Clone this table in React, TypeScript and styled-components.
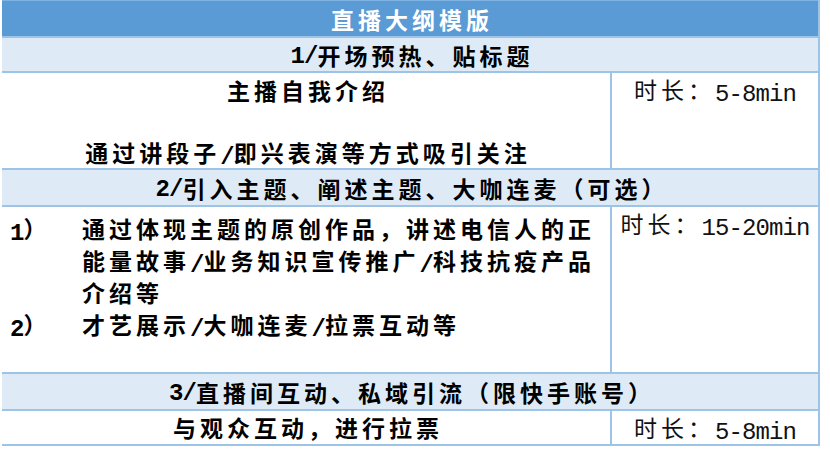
import React from "react";
import styled, { createGlobalStyle } from "styled-components";

const LINE = "#9dc3e6";

const Global = createGlobalStyle`
  html, body { margin: 0; padding: 0; background: #ffffff; }
  body { font-family: "Noto Sans CJK SC", sans-serif; }
`;

const Table = styled.div`
  width: 818px;
  box-sizing: border-box;
  margin-left: 2px;
  border-right: 2px solid ${LINE};
  display: flex;
  flex-direction: column;
  font-family: "Noto Sans CJK SC", "Noto Sans CJK JP", sans-serif;
  font-size: 23px;
  letter-spacing: 4px;
  color: #000;
`;

const TitleBar = styled.div`
  height: 38px;
  box-sizing: border-box;
  background: #5b9bd5;
  border-top: 1px solid #7eb2e2;
  border-bottom: 2px solid ${LINE};
  color: #ffffff;
  font-weight: 700;
  display: flex;
  align-items: center;
  justify-content: center;
  padding-left: 4px;
`;

const Band = styled.div<{ $h: number }>`
  height: ${(p) => p.$h}px;
  box-sizing: border-box;
  background: #deebf7;
  border-bottom: 2px solid ${LINE};
  font-weight: 700;
  display: flex;
  align-items: center;
  justify-content: center;
  padding-left: 4px;
`;

const Row = styled.div<{ $h: number }>`
  height: ${(p) => p.$h}px;
  box-sizing: border-box;
  border-bottom: 2px solid ${LINE};
  display: flex;
`;

const MainCell = styled.div<{ $pt: number; $lh: number; $center?: boolean }>`
  width: 610px;
  flex: none;
  box-sizing: border-box;
  border-right: 2px solid ${LINE};
  padding-top: ${(p) => p.$pt}px;
  padding-left: ${(p) => (p.$center ? 4 : 8)}px;
  line-height: ${(p) => p.$lh}px;
  font-weight: 700;
  text-align: ${(p) => (p.$center ? "center" : "left")};
`;

const TimeCell = styled.div<{ $pt: number; $lh: number }>`
  flex: 1;
  padding-top: ${(p) => p.$pt}px;
  line-height: ${(p) => p.$lh}px;
  text-align: center;
  font-weight: 400;
  color: #111;
`;

const TextLine = styled.div`
  min-height: 1lh;
`;

const List = styled.div`
  display: grid;
  grid-template-columns: 72px 1fr;
`;

const Marker = styled.div``;

const ItemText = styled.div``;

const Latin = styled.span`
  font-family: "Liberation Mono", monospace;
  font-size: 24px;
  letter-spacing: -0.9px;
  line-height: 1;
  position: relative;
  top: 2px;
`;

const Mixed = ({ text }: { text: string }) => {
  const parts = text.split(/([\x21-\x7e]+)/);
  return (
    <>
      {parts.map((p, i) => (i % 2 ? <Latin key={i}>{p}</Latin> : <React.Fragment key={i}>{p}</React.Fragment>))}
    </>
  );
};

export default function App() {
  return (
    <>
      <Global />
      <Table>
        <TitleBar>直播大纲模版</TitleBar>

        <Band $h={35}>
          <Mixed text="1/开场预热、贴标题" />
        </Band>
        <Row $h={97}>
          <MainCell $pt={2} $lh={31} $center>
            <TextLine>主播自我介绍</TextLine>
            <TextLine />
            <TextLine>
              <Mixed text="通过讲段子/即兴表演等方式吸引关注" />
            </TextLine>
          </MainCell>
          <TimeCell $pt={1} $lh={31}>
            <Mixed text="时长：5-8min" />
          </TimeCell>
        </Row>

        <Band $h={37}>
          <Mixed text="2/引入主题、阐述主题、大咖连麦（可选）" />
        </Band>
        <Row $h={167}>
          <MainCell $pt={5} $lh={32}>
            <List>
              <Marker>
                <Mixed text="1）" />
              </Marker>
              <ItemText>
                <TextLine>通过体现主题的原创作品，讲述电信人的正</TextLine>
                <TextLine>
                  <Mixed text="能量故事/业务知识宣传推广/科技抗疫产品" />
                </TextLine>
                <TextLine>介绍等</TextLine>
              </ItemText>
              <Marker>
                <Mixed text="2）" />
              </Marker>
              <ItemText>
                <Mixed text="才艺展示/大咖连麦/拉票互动等" />
              </ItemText>
            </List>
          </MainCell>
          <TimeCell $pt={0} $lh={32}>
            <Mixed text="时长：15-20min" />
          </TimeCell>
        </Row>

        <Band $h={37}>
          <Mixed text="3/直播间互动、私域引流（限快手账号）" />
        </Band>
        <Row $h={35}>
          <MainCell $pt={0} $lh={33} $center>
            与观众互动，进行拉票
          </MainCell>
          <TimeCell $pt={0} $lh={33}>
            <Mixed text="时长：5-8min" />
          </TimeCell>
        </Row>
      </Table>
    </>
  );
}
